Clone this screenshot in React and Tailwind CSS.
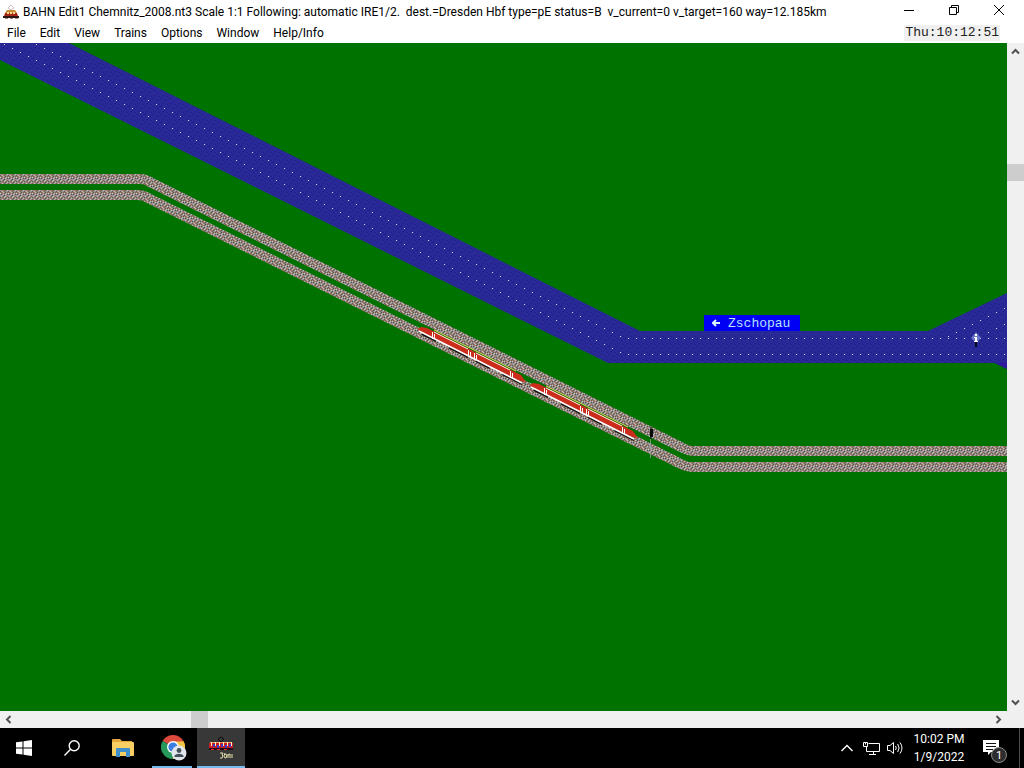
import React from "react";

const WINDOW_TITLE =
  "BAHN Edit1 Chemnitz_2008.nt3 Scale 1:1 Following: automatic IRE1/2.  dest.=Dresden Hbf type=pE status=B  v_current=0 v_target=160 way=12.185km";
const MENUS = ["File", "Edit", "View", "Trains", "Options", "Window", "Help/Info"];

/* Rows of wave highlights, 8 units apart along the river. */
const waves = [];
for (let x = 4; x <= 1004; x += 8) {
  waves.push([x, Math.min(26 + x / 2, 338)]);
  waves.push([x, Math.min(42 + x / 2, 354)]);
}
for (let i = 0; i < 8; i += 1) waves.push([948 + i * 8, 336 - i * 4]);
for (let i = 0; i < 3; i += 1) waves.push([988 + i * 8, 332 - i * 4]);

/* Ballast texture, one letter for each unit. */
const BALLAST = [
  "gbgwgdgb",
  "wgrgbgwg",
  "gdgwgwgd",
  "lglgdglg",
  "gwgdgwgr",
  "dgbgwgbg",
  "glgrgdgw",
  "bgwgbglg",
];
const BALLAST_COLORS = {
  g: "#95877f",
  b: "#7a584a",
  w: "#c4c0c4",
  d: "#4a5a48",
  r: "#b4664a",
  l: "#9c9cb4",
};

function Railcar({ x, y }) {
  const doors = [
    [14, 6],
    [50, 24],
    [56, 27],
    [92, 45],
  ];
  return (
    <g transform={`translate(${x} ${y})`} fill="none">
      <path d="M4 8 108 60" stroke="#15120f" strokeWidth="2" strokeDasharray="16 14 22 8" />
      <path d="M0 3 3 1 9 2 103 49 108 56 102 55 1 5Z" fill="#cc2c1c" />
      <path d="M16 4 98 45" stroke="#ecd468" />
      <path d="M16 6 50 23M58 27 92 44" stroke="#fff4e4" />
      <path d="M1 5 104 57" stroke="#ffffff" strokeWidth="1.500" />
      {doors.map(([dx, dy]) => (
        <path key={dx} d={`M${dx + 0.5} ${dy}v7M${dx + 2.5} ${dy + 2}v5`} stroke="#ffffff" />
      ))}
    </g>
  );
}

function TrackPlan() {
  return (
    <svg className="block h-full w-full" role="img" aria-label="Track plan">
      <defs>
        <pattern id="ballast" width="8" height="8" patternUnits="userSpaceOnUse">
          {BALLAST.map((row, y) =>
            [...row].map((c, x) => (
              <rect key={`${x}-${y}`} x={x} y={y} width="1" height="1" fill={BALLAST_COLORS[c]} />
            ))
          )}
        </pattern>
        <pattern id="water" width="8" height="8" patternUnits="userSpaceOnUse">
          <rect width="8" height="8" fill="#282896" />
          <path d="M1 2h1v1H1zM5 4h1v1H5zM3 7h1v1H3zM7 0h1v1H7z" fill="#1c1c80" />
          <path d="M2 5h1v1H2zM6 1h1v1H6z" fill="#3232a0" />
        </pattern>
      </defs>
      <g transform="translate(0 -43)">
        <path
          d="M0 43H69L640 331H928L1007 293V369L995 363H608L0 60Z"
          fill="url(#water)"
        />
        <path d="M993 362H1007V369Z" fill="#2c1c9c" />
        {waves.map(([x, y], i) => (
          <rect key={i} x={x} y={y} width="1" height="1" fill="#dcdcf4" />
        ))}
        <g fill="none" stroke="url(#ballast)" strokeWidth="10" strokeLinejoin="round">
          <path d="M0 179H140Q146 179 152 183L681 447Q688 451 694 451H1007" />
          <path d="M0 195H138Q144 195 150 199L679 463Q686 467 692 467H1007" />
        </g>
        <Railcar x={418} y={326} />
        <Railcar x={530} y={382} />
        <path d="M650 429h3v8h-3z" fill="#0a0a0a" />
        <path d="M651 427v12" stroke="#0a0a0a" />
        <path d="M650.500 439v19M647 448h7" stroke="#93a49a" opacity="0.8" />
        <path d="M976 332 981 338 976 343 971 338Z" fill="#6a74c8" />
        <path d="M976 342v5" stroke="#05051c" strokeWidth="2" />
        <path d="M975 334h2v2h-2zM974 337h3v4h1v1h-4v-1h1v-3h-1z" fill="#ffffff" />
      </g>
    </svg>
  );
}

function Arrow({ d }) {
  return (
    <svg width="9" height="9" viewBox="0 0 9 9" fill="none" stroke="#505050" strokeWidth="2" aria-hidden="true">
      <path d={d} />
    </svg>
  );
}

function TrolleyIcon() {
  return (
    <svg width="18" height="16" viewBox="0 0 18 16" aria-hidden="true">
      <path d="M6 4 9 1 12 4 9 6Z" fill="none" stroke="#cdbfc6" />
      <path d="M5 6H13L15 9H3Z" fill="#c98a34" />
      <path d="M3 9H15L16 12H2Z" fill="#a82818" />
      <path d="M5 8h2v2H5zM8 8h2v2H8zM11 8h2v2h-2z" fill="#f4d890" />
      <path d="M1 12H17V14H1Z" fill="#2d1713" />
      <path d="M3 14h3v1H3zM8 14h3v1H8zM13 14h3v1h-3z" fill="#a08878" />
    </svg>
  );
}

function BahnTaskIcon() {
  return (
    <svg width="24" height="24" viewBox="0 0 24 24" aria-hidden="true">
      <path d="M12 1 15 3 12 6 9 3Z" fill="none" stroke="#0b0b0b" />
      <path d="M1 6H23V7H1Z" fill="#e0a060" />
      <path d="M0 7H24V12H0Z" fill="#d01c20" />
      <path d="M2 6h1v4H2zM6 6h1v4H6zM10 6h1v4h-1zM14 6h1v4h-1zM18 6h1v4h-1zM22 6h1v4h-1z" fill="#fff2c0" />
      <path d="M4 8h2v3H4zM8 9h2v3H8zM12 8h2v3h-2zM16 9h2v3h-2zM20 8h2v3h-2z" fill="#3838c0" />
      <path d="M0 12H24V14H0Z" fill="#240c18" />
      <path d="M2 13h3v1H2zM8 13h3v1H8zM15 13h3v1h-3z" fill="#e03028" />
      <path
        d="M11 17h3l-1 2 1 1-1 2h-2M16 17l-1 3 1 2h1l1-3-2-1M19 18v4M19 19l2-1v4M23 18v4"
        fill="none"
        stroke="#e4dfaa"
      />
    </svg>
  );
}

function ChromeIcon() {
  return (
    <svg width="26" height="26" viewBox="0 0 26 26" aria-hidden="true">
      <path d="M12 12 1.600 6A12 12 0 0 1 22.400 6Z" fill="#dc4a3c" />
      <path d="M12 12 22.400 6A12 12 0 0 1 12 24Z" fill="#f6c445" />
      <path d="M12 12 12 24A12 12 0 0 1 1.600 6Z" fill="#26985a" />
      <path d="M12 6.500H22.600A12 12 0 0 1 24 12L17 12Z" fill="#f6c445" />
      <circle cx="12" cy="12" r="6" fill="#ffffff" />
      <circle cx="12" cy="12" r="4.600" fill="#3b7de0" />
      <circle cx="18" cy="18" r="7.500" fill="#e2e6ea" />
      <circle cx="18" cy="15.500" r="2.400" fill="#42505c" />
      <path d="M13.500 22V20.500Q15 18.800 18 18.800T22.500 20.500V22Z" fill="#42505c" />
    </svg>
  );
}

function TaskButton({ label, className = "", children }) {
  return (
    <button type="button" aria-label={label} className={`flex h-10 w-12 items-center justify-center ${className}`}>
      {children}
    </button>
  );
}

export default function App() {
  return (
    <div className="flex h-screen flex-col overflow-hidden bg-white font-['Roboto','Open_Sans',sans-serif] text-xs text-black">
      <header className="flex h-6 shrink-0 items-center justify-between pl-0.5">
        <div className="flex min-w-0 items-center gap-[3px]">
          <TrolleyIcon />
          <h1 className="truncate font-normal whitespace-pre">{WINDOW_TITLE}</h1>
        </div>
        <div className="flex shrink-0 pr-[3px] pb-1">
          <button type="button" aria-label="Minimize" className="flex w-[45px] justify-center">
            <svg width="12" height="12" viewBox="0 0 12 12" stroke="#000" fill="none">
              <path d="M1 6.500H11" />
            </svg>
          </button>
          <button type="button" aria-label="Restore" className="flex w-[45px] justify-center">
            <svg width="12" height="12" viewBox="0 0 12 12" stroke="#000" fill="none">
              <path d="M1.500 3.500H8.500V10.500H1.500ZM3.500 3.500V1.500H10.500V8.500H8.500" />
            </svg>
          </button>
          <button type="button" aria-label="Close" className="flex w-[45px] justify-center">
            <svg width="12" height="12" viewBox="0 0 12 12" stroke="#000" fill="none">
              <path d="M1 1 11 11M11 1 1 11" />
            </svg>
          </button>
        </div>
      </header>

      <div className="flex h-[19px] shrink-0 items-start justify-between pr-6">
        <nav className="flex" aria-label="Menu bar">
          {MENUS.map((m) => (
            <button key={m} type="button" className="px-[7px] leading-[18px]">
              {m}
            </button>
          ))}
        </nav>
        <time className="mt-px bg-[#f0f0f0] px-px font-['Liberation_Mono',monospace] text-[13px] leading-4 text-[#222222]">
          Thu:10:12:51
        </time>
      </div>

      <div className="flex min-h-0 flex-1">
        <main className="relative min-w-0 flex-1 overflow-hidden bg-[#007200]">
          <TrackPlan />
          <div className="absolute top-[272px] left-[704px] flex h-4 w-24 items-center gap-2 bg-[#0000f4] pl-2 font-['Liberation_Mono',monospace] text-[13px] leading-4 text-[#b8e4ff]">
            <svg width="8" height="9" viewBox="0 0 8 9" fill="none" stroke="#d8f4ff" strokeWidth="2" aria-hidden="true">
              <path d="M8 4H1M4 1 1 4 4 7" />
            </svg>
            <span className="pt-0.5">Zschopau</span>
          </div>
        </main>
        <div className="flex w-[17px] shrink-0 flex-col items-center bg-[#f0f0f0]">
          <button type="button" aria-label="Scroll up" className="flex size-[17px] items-center justify-center">
            <Arrow d="M1 6.500 4.500 3 8 6.500" />
          </button>
          <div className="w-full flex-1 pt-[104px]">
            <div className="h-[17px] bg-[#cdcdcd]" />
          </div>
          <button type="button" aria-label="Scroll down" className="flex size-[17px] items-center justify-center">
            <Arrow d="M1 2.500 4.500 6 8 2.500" />
          </button>
        </div>
      </div>

      <div className="flex h-[17px] shrink-0 items-center bg-[#f0f0f0] pr-[17px]">
        <button type="button" aria-label="Scroll left" className="flex size-[17px] items-center justify-center">
          <Arrow d="M6.500 1 3 4.500 6.500 8" />
        </button>
        <div className="h-full flex-1 pl-[174px]">
          <div className="h-full w-[17px] bg-[#cdcdcd]" />
        </div>
        <button type="button" aria-label="Scroll right" className="flex size-[17px] items-center justify-center">
          <Arrow d="M2.500 1 6 4.500 2.500 8" />
        </button>
      </div>

      <footer className="flex h-10 shrink-0 justify-between bg-black text-white">
        <div className="flex gap-px">
          <div className="flex">
            <TaskButton label="Start">
              <svg width="16" height="16" viewBox="0 0 16 16" fill="#fff">
                <path d="M0 2.300 6.500 1.400V7.500H0ZM7.500 1.200 16 0V7.500H7.500ZM0 8.500H6.500V14.600L0 13.700ZM7.500 8.500H16V16L7.500 14.800Z" />
              </svg>
            </TaskButton>
            <TaskButton label="Search">
              <svg width="16" height="16" viewBox="0 0 16 16" fill="none" stroke="#fff" strokeWidth="1.400">
                <circle cx="10.200" cy="5.700" r="5" />
                <path d="M6.600 9.300 0.500 15.400" />
              </svg>
            </TaskButton>
          </div>
          <TaskButton label="File Explorer" className="ml-0.5">
            <svg width="22" height="18" viewBox="0 0 22 18">
              <path d="M0 1Q0 0 1 0H8L10 2H20V16H0Z" fill="#e5a93b" />
              <path d="M0 3H21Q22 3 22 4V16Q22 17 21 17H1Q0 17 0 16Z" fill="#f8cf62" />
              <path d="M4 18V10Q4 9 5 9H17Q18 9 18 10V18H14V13H8V18Z" fill="#3f8fcc" />
            </svg>
          </TaskButton>
          <TaskButton label="Google Chrome" className="relative pl-1">
            <ChromeIcon />
            <span className="absolute inset-x-1 bottom-0 h-0.5 bg-[#76b9ed]" />
          </TaskButton>
          <TaskButton label="BAHN" className="relative bg-[#383838]">
            <BahnTaskIcon />
            <span className="absolute inset-x-0 bottom-0 h-0.5 bg-[#76b9ed]" />
          </TaskButton>
        </div>

        <div className="flex items-center">
          <button type="button" aria-label="Show hidden icons" className="flex w-6 justify-center">
            <svg width="12" height="8" viewBox="0 0 12 8" fill="none" stroke="#fff" strokeWidth="1.400">
              <path d="M0.500 7 6 1.500 11.500 7" />
            </svg>
          </button>
          <button type="button" aria-label="Network" className="flex w-6 justify-center">
            <svg width="17" height="15" viewBox="0 0 17 15" fill="none" stroke="#fff">
              <path d="M5.500 2.500H16.500V10.500H3.500V5.500M10.500 10.500V13.500M6 13.500H13" />
              <path d="M0.500 1.500H4.500V5.500H0.500ZM2.500 1.500V3.500" />
            </svg>
          </button>
          <button type="button" aria-label="Volume" className="flex w-6 justify-center">
            <svg width="17" height="14" viewBox="0 0 17 14" fill="none" stroke="#fff">
              <path d="M0.500 4.500H3L6.500 1.500V12.500L3 9.500H0.500Z" />
              <path d="M8.500 5Q10 7 8.500 9M10.700 3Q13.500 7 10.700 11M13 1.500Q17 7 13 12.500" />
            </svg>
          </button>
          <button type="button" aria-label="Date and time" className="w-16 text-center leading-[18px]">
            <span className="block">10:02 PM</span>
            <span className="block">1/9/2022</span>
          </button>
          <button type="button" aria-label="Notifications, 1 new" className="relative flex h-10 w-12 justify-center pt-3">
            <svg width="16" height="16" viewBox="0 0 16 16" className="-ml-2">
              <path d="M0 0H16V12H8L5 15V12H0Z" fill="#fff" />
              <path d="M3 3.500H13M3 6.500H13M3 9.500H10" stroke="#111" />
            </svg>
            <span className="absolute top-[19px] left-5 flex size-4 items-center justify-center rounded-full border border-[#8a8a8a] bg-[#2d2d2d] text-[11px] leading-none">
              1
            </span>
          </button>
          <div className="mr-1 h-full w-px bg-[#4a4a4a]" />
        </div>
      </footer>
    </div>
  );
}
